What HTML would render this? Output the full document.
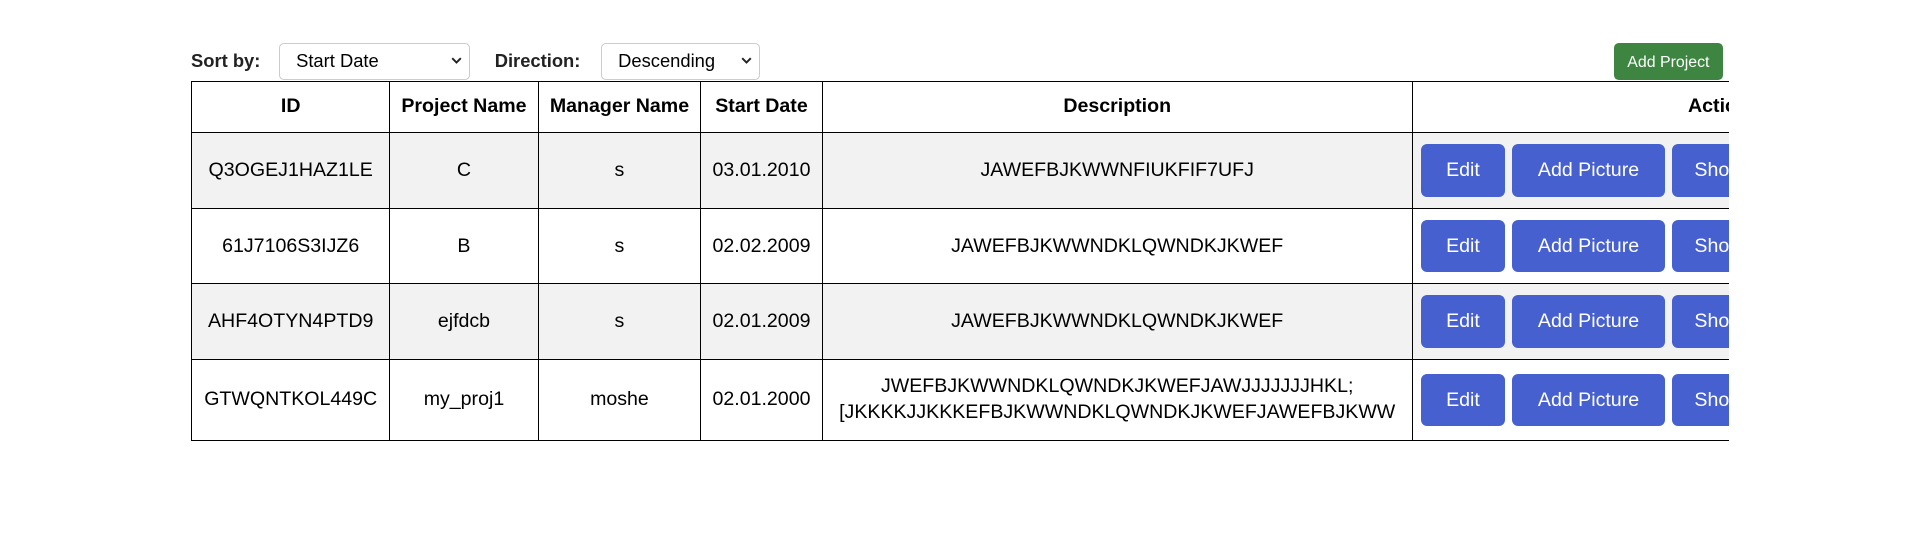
<!DOCTYPE html>
<html><head><style>
html,body{margin:0;background:#fff;}
body{zoom:1.2245;font-family:"Liberation Sans",Arial,sans-serif;font-size:16px;color:#000;width:1568px;height:436px;overflow:hidden;position:relative}
.lbl{position:absolute;top:41px;font-weight:bold;font-size:15px;color:#222}
.sel{position:absolute;top:35px;height:30px;border:1px solid #ccc;border-radius:4px;box-sizing:border-box;font-size:15px;line-height:28px;padding-left:13px;background:#fff}
.sel svg{position:absolute;right:6px;top:11px}
.green{position:absolute;left:1318px;top:35px;width:89px;height:30px;background:#3d8540;color:#fff;border-radius:4px;font-size:13px;line-height:32px;text-align:center}
.wrap{position:absolute;left:156px;top:66px;width:1256px;overflow:hidden}
table{border-collapse:collapse;width:1655px;table-layout:fixed}
td,th{border:1px solid #000;text-align:center;padding:0}
th{height:41px;font-weight:bold}
tr.g td{background:#f2f2f2}
td{height:61px}
.b{display:inline-block;background:#4760cf;color:#fff;border-radius:5px;height:43px;line-height:43px;vertical-align:middle;margin-right:6px}
.act{text-align:left;padding-left:7px;white-space:nowrap}
</style></head><body>
<div class="lbl" style="left:156px">Sort by:</div>
<div class="sel" style="left:228px;width:156px">Start Date<svg width="9" height="6" viewBox="0 0 9 6"><path d="M1 1l3.5 3.5L8 1" stroke="#222" stroke-width="1.6" fill="none"/></svg></div>
<div class="lbl" style="left:404px">Direction:</div>
<div class="sel" style="left:491px;width:130px">Descending<svg width="9" height="6" viewBox="0 0 9 6"><path d="M1 1l3.5 3.5L8 1" stroke="#222" stroke-width="1.6" fill="none"/></svg></div>
<div class="green">Add Project</div>
<div class="wrap"><table>
<colgroup><col style="width:162px"><col style="width:121px"><col style="width:133px"><col style="width:99px"><col style="width:482px"><col style="width:659px"></colgroup>
<tr><th>ID</th><th>Project Name</th><th>Manager Name</th><th>Start Date</th><th>Description</th><th style="padding-right:150px">Actions</th></tr>
<tr class="g"><td>Q3OGEJ1HAZ1LE</td><td>C</td><td>s</td><td>03.01.2010</td><td>JAWEFBJKWWNFIUKFIF7UFJ</td><td class="act"><span class="b" style="width:68px;text-align:center">Edit</span><span class="b" style="width:125px;text-align:center">Add Picture</span><span class="b" style="width:120px;padding-left:18px">Show</span></td></tr>
<tr><td>61J7106S3IJZ6</td><td>B</td><td>s</td><td>02.02.2009</td><td>JAWEFBJKWWNDKLQWNDKJKWEF</td><td class="act"><span class="b" style="width:68px;text-align:center">Edit</span><span class="b" style="width:125px;text-align:center">Add Picture</span><span class="b" style="width:120px;padding-left:18px">Show</span></td></tr>
<tr class="g"><td>AHF4OTYN4PTD9</td><td>ejfdcb</td><td>s</td><td>02.01.2009</td><td>JAWEFBJKWWNDKLQWNDKJKWEF</td><td class="act"><span class="b" style="width:68px;text-align:center">Edit</span><span class="b" style="width:125px;text-align:center">Add Picture</span><span class="b" style="width:120px;padding-left:18px">Show</span></td></tr>
<tr><td style="height:65px">GTWQNTKOL449C</td><td>my_proj1</td><td>moshe</td><td>02.01.2000</td><td style="line-height:21px">JWEFBJKWWNDKLQWNDKJKWEFJAWJJJJJJJHKL;<br>[JKKKKJJKKKEFBJKWWNDKLQWNDKJKWEFJAWEFBJKWW</td><td class="act"><span class="b" style="width:68px;text-align:center">Edit</span><span class="b" style="width:125px;text-align:center">Add Picture</span><span class="b" style="width:120px;padding-left:18px">Show</span></td></tr>
</table></div>
</body></html>
